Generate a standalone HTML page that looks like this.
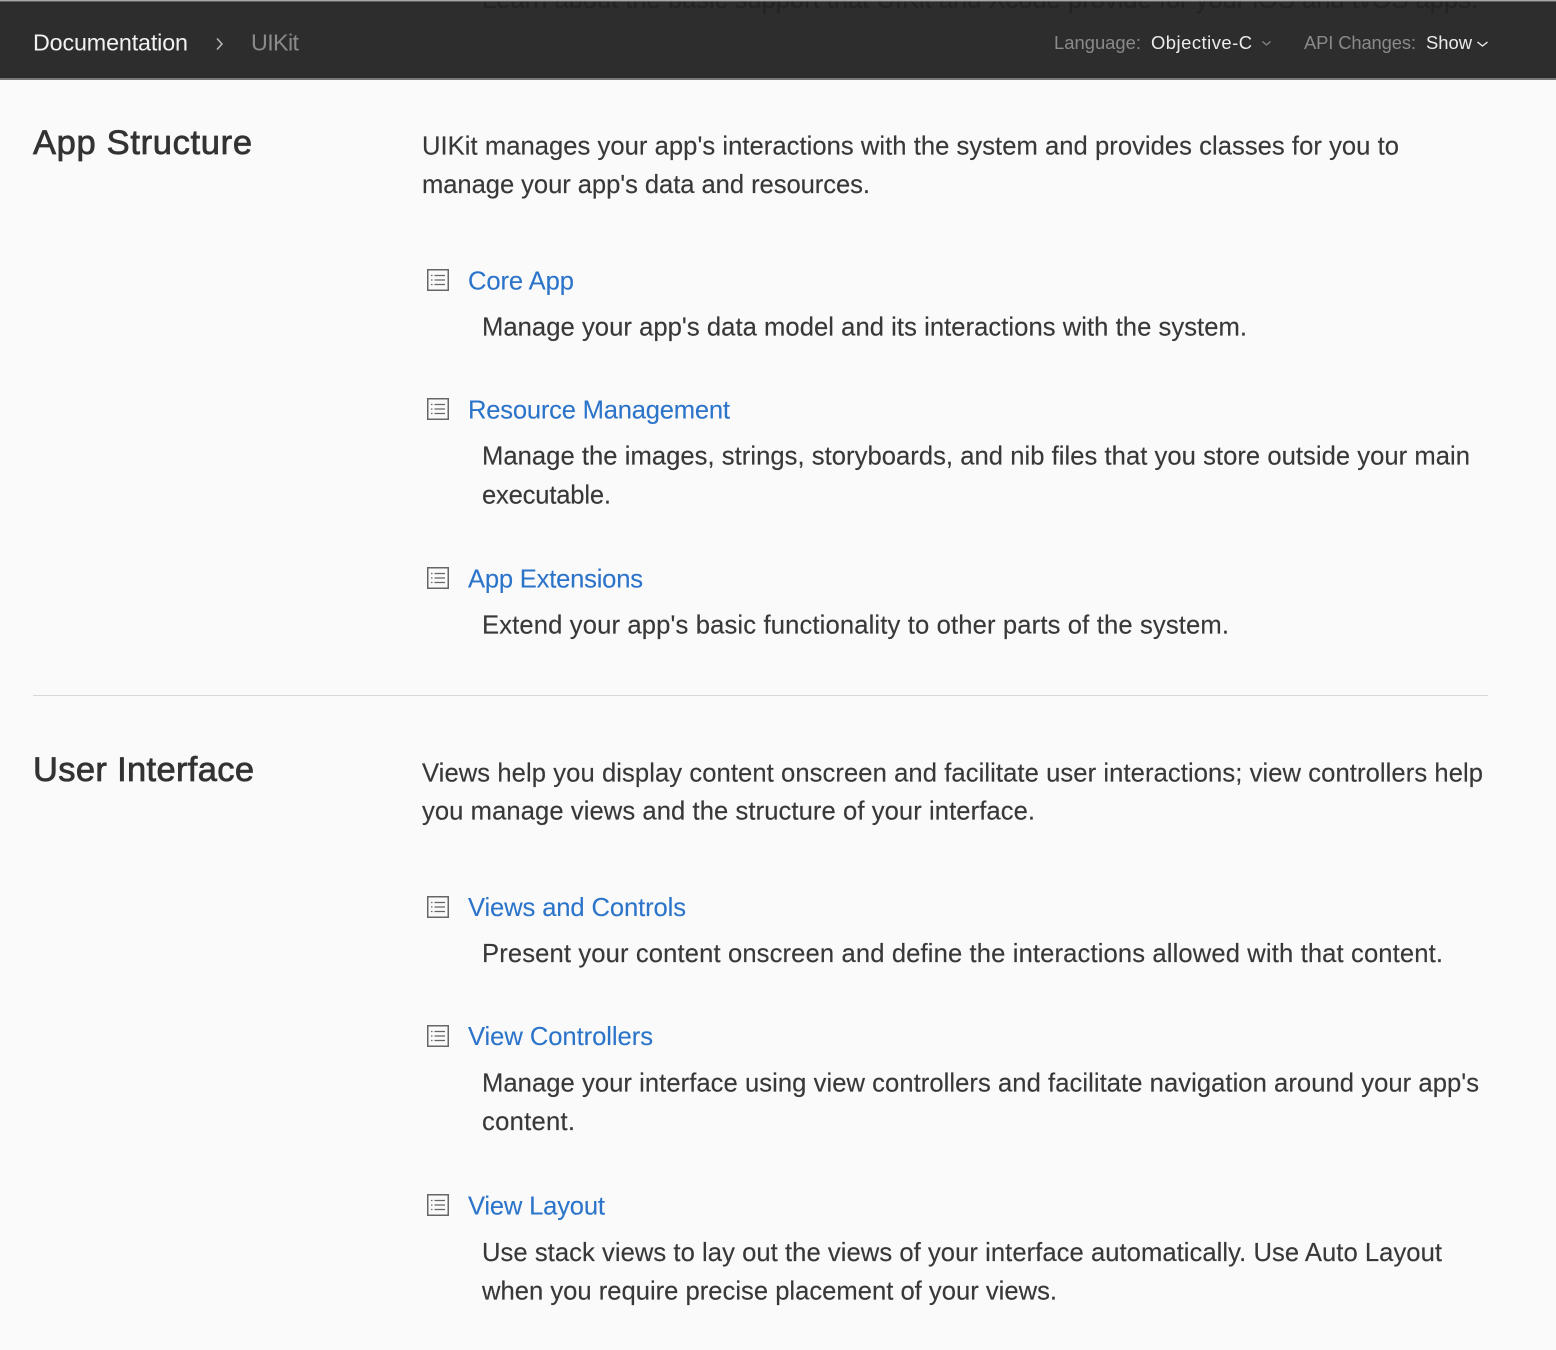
<!DOCTYPE html>
<html lang="en">
<head>
<meta charset="utf-8">
<title>UIKit | Documentation</title>
<style>
html,body{margin:0;padding:0;background:#fafafa;width:1556px;height:1350px;overflow:hidden}
svg{display:block;position:absolute;left:0;top:0}
text{font-family:"Liberation Sans",Arial,sans-serif;white-space:pre}
.b{font-size:25.6px;fill:#383838;stroke:#383838;stroke-width:.15px}
.l{font-size:25.6px;fill:#2b74c9;stroke:#2b74c9;stroke-width:.1px}
.h{font-size:34.5px;fill:#333;stroke:#333;stroke-width:.75px}
.n{font-size:18.4px;fill:#8a8a8a}
.v{font-size:18.4px;fill:#ececec}
</style>
</head>
<body>
<svg width="1556" height="1350" viewBox="0 0 1556 1350" xmlns="http://www.w3.org/2000/svg">
<defs>
<g id="doc" fill="none" stroke="#666">
<rect x=".75" y=".75" width="20.5" height="20.5" stroke-width="1.5" fill="#fafafa"/>
<path d="M7.5 6.5H18M7.5 11H18M7.5 15.5H18" stroke-width="1.3"/>
<path d="M4 6.5H5.5M4 11H5.5M4 15.5H5.5" stroke-width="1.3"/>
</g>
</defs>

<rect x="0" y="0" width="1556" height="79" fill="#2d2d2d"/>
<text x="482" y="8" font-size="25.6" fill="#232323" textLength="996" lengthAdjust="spacing">Learn about the basic support that UIKit and Xcode provide for your iOS and tvOS apps.</text>
<rect x="0" y="0" width="1556" height="1.4" fill="#a8a8a8"/>
<rect x="0" y="78" width="1556" height="2" fill="#777"/>

<text x="33" y="50.7" font-size="23.3" fill="#f2f2f2" textLength="155" lengthAdjust="spacing">Documentation</text>
<path d="M217 38.5L222 44L217 49.5" fill="none" stroke="#b5b5b5" stroke-width="1.6"/>
<text x="251" y="50.7" font-size="23.3" fill="#8a8a8a" textLength="48" lengthAdjust="spacing">UIKit</text>

<text x="1054" y="49" class="n" textLength="87" lengthAdjust="spacing">Language:</text>
<text x="1151" y="49" class="v" textLength="101" lengthAdjust="spacing">Objective-C</text>
<path d="M1262.5 41.5L1266.5 45L1270.5 41.5" fill="none" stroke="#8a8a8a" stroke-width="1.2"/>
<text x="1304" y="49" class="n" textLength="112" lengthAdjust="spacing">API Changes:</text>
<text x="1426" y="49" class="v" textLength="46" lengthAdjust="spacing">Show</text>
<path d="M1477.5 42L1482.5 46L1487.5 42" fill="none" stroke="#ececec" stroke-width="1.4"/>

<text x="33" y="154" class="h" textLength="219" lengthAdjust="spacing">App Structure</text>
<text x="422" y="154.5" class="b" textLength="977" lengthAdjust="spacing">UIKit manages your app's interactions with the system and provides classes for you to</text>
<text x="422" y="193" class="b" textLength="448" lengthAdjust="spacing">manage your app's data and resources.</text>

<use href="#doc" x="427" y="269"/>
<text x="468" y="289.5" class="l" textLength="106" lengthAdjust="spacing">Core App</text>
<text x="482" y="335.5" class="b" textLength="765" lengthAdjust="spacing">Manage your app's data model and its interactions with the system.</text>

<use href="#doc" x="427" y="398"/>
<text x="468" y="418.5" class="l" textLength="262" lengthAdjust="spacing">Resource Management</text>
<text x="482" y="464.5" class="b" textLength="988" lengthAdjust="spacing">Manage the images, strings, storyboards, and nib files that you store outside your main</text>
<text x="482" y="503.5" class="b" textLength="129" lengthAdjust="spacing">executable.</text>

<use href="#doc" x="427" y="567"/>
<text x="468" y="587.5" class="l" textLength="175" lengthAdjust="spacing">App Extensions</text>
<text x="482" y="633.5" class="b" textLength="747" lengthAdjust="spacing">Extend your app's basic functionality to other parts of the system.</text>

<rect x="33" y="695" width="1455" height="1" fill="#d8d8d8"/>

<text x="33" y="781" class="h" textLength="221" lengthAdjust="spacing">User Interface</text>
<text x="422" y="781.5" class="b" textLength="1061" lengthAdjust="spacing">Views help you display content onscreen and facilitate user interactions; view controllers help</text>
<text x="422" y="819.5" class="b" textLength="613" lengthAdjust="spacing">you manage views and the structure of your interface.</text>

<use href="#doc" x="427" y="896"/>
<text x="468" y="916" class="l" textLength="218" lengthAdjust="spacing">Views and Controls</text>
<text x="482" y="962" class="b" textLength="961" lengthAdjust="spacing">Present your content onscreen and define the interactions allowed with that content.</text>

<use href="#doc" x="427" y="1025"/>
<text x="468" y="1045" class="l" textLength="185" lengthAdjust="spacing">View Controllers</text>
<text x="482" y="1091.5" class="b" textLength="997" lengthAdjust="spacing">Manage your interface using view controllers and facilitate navigation around your app's</text>
<text x="482" y="1130" class="b" textLength="93" lengthAdjust="spacing">content.</text>

<use href="#doc" x="427" y="1194"/>
<text x="468" y="1214.5" class="l" textLength="137" lengthAdjust="spacing">View Layout</text>
<text x="482" y="1261" class="b" textLength="960" lengthAdjust="spacing">Use stack views to lay out the views of your interface automatically. Use Auto Layout</text>
<text x="482" y="1299.5" class="b" textLength="575" lengthAdjust="spacing">when you require precise placement of your views.</text>
</svg>
</body>
</html>
